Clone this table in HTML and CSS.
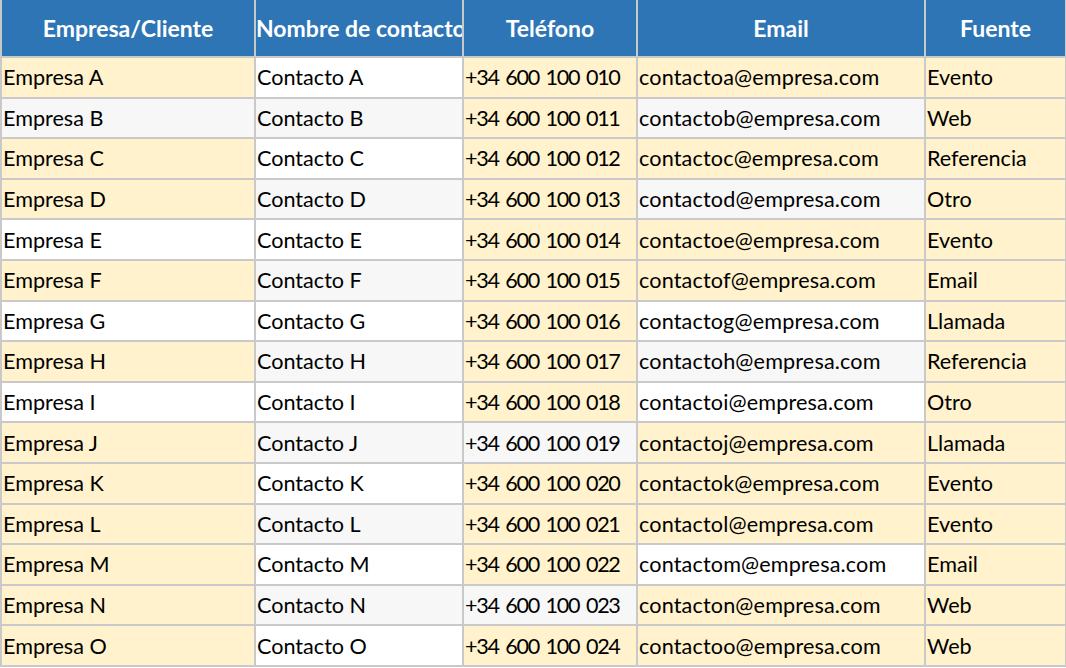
FILE: index.html
```html
<!DOCTYPE html>
<html lang="es">
<head>
<meta charset="utf-8">
<title>Contactos</title>
<link rel="stylesheet" href="styles.css">
</head>
<body>
<table class="sheet">
  <colgroup>
    <col class="c1"><col class="c2"><col class="c3"><col class="c4"><col class="c5">
  </colgroup>
  <thead>
    <tr><th>Empresa/Cliente</th><th>Nombre de contacto</th><th>Teléfono</th><th>Email</th><th>Fuente</th></tr>
  </thead>
  <tbody>
    <tr class="odd"><td class="hl">Empresa A</td><td>Contacto A</td><td class="hl">+34 600 100 010</td><td class="hl">contactoa@empresa.com</td><td class="hl">Evento</td></tr>
    <tr class="even"><td>Empresa B</td><td>Contacto B</td><td class="hl">+34 600 100 011</td><td>contactob@empresa.com</td><td class="hl">Web</td></tr>
    <tr class="odd"><td class="hl">Empresa C</td><td>Contacto C</td><td class="hl">+34 600 100 012</td><td class="hl">contactoc@empresa.com</td><td class="hl">Referencia</td></tr>
    <tr class="even"><td class="hl">Empresa D</td><td>Contacto D</td><td class="hl">+34 600 100 013</td><td>contactod@empresa.com</td><td class="hl">Otro</td></tr>
    <tr class="odd"><td>Empresa E</td><td>Contacto E</td><td class="hl">+34 600 100 014</td><td class="hl">contactoe@empresa.com</td><td class="hl">Evento</td></tr>
    <tr class="even"><td class="hl">Empresa F</td><td>Contacto F</td><td class="hl">+34 600 100 015</td><td class="hl">contactof@empresa.com</td><td class="hl">Email</td></tr>
    <tr class="odd"><td>Empresa G</td><td>Contacto G</td><td class="hl">+34 600 100 016</td><td>contactog@empresa.com</td><td class="hl">Llamada</td></tr>
    <tr class="even"><td class="hl">Empresa H</td><td>Contacto H</td><td class="hl">+34 600 100 017</td><td>contactoh@empresa.com</td><td class="hl">Referencia</td></tr>
    <tr class="odd"><td>Empresa I</td><td>Contacto I</td><td class="hl">+34 600 100 018</td><td>contactoi@empresa.com</td><td class="hl">Otro</td></tr>
    <tr class="even"><td class="hl">Empresa J</td><td>Contacto J</td><td>+34 600 100 019</td><td class="hl">contactoj@empresa.com</td><td class="hl">Llamada</td></tr>
    <tr class="odd"><td class="hl">Empresa K</td><td>Contacto K</td><td class="hl">+34 600 100 020</td><td class="hl">contactok@empresa.com</td><td class="hl">Evento</td></tr>
    <tr class="even"><td class="hl">Empresa L</td><td>Contacto L</td><td class="hl">+34 600 100 021</td><td class="hl">contactol@empresa.com</td><td class="hl">Evento</td></tr>
    <tr class="odd"><td class="hl">Empresa M</td><td>Contacto M</td><td class="hl">+34 600 100 022</td><td>contactom@empresa.com</td><td class="hl">Email</td></tr>
    <tr class="even"><td class="hl">Empresa N</td><td>Contacto N</td><td>+34 600 100 023</td><td class="hl">contacton@empresa.com</td><td class="hl">Web</td></tr>
    <tr class="odd"><td class="hl">Empresa O</td><td>Contacto O</td><td class="hl">+34 600 100 024</td><td class="hl">contactoo@empresa.com</td><td class="hl">Web</td></tr>
  </tbody>
</table>
</body>
</html>
```
FILE: styles.css
```css
html, body {
  margin: 0;
  padding: 0;
  background: #ffffff;
}

.sheet {
  border-collapse: collapse;
  table-layout: fixed;
  width: 1065px;
  font-family: Lato, "Liberation Sans", sans-serif;
  font-size: 21.6px;
  color: #000;
}

.c1 { width: 254px; }
.c2 { width: 208px; }
.c3 { width: 174px; }
.c4 { width: 288px; }
.c5 { width: 141px; }

.sheet th,
.sheet td {
  border: 2px solid #c9c9c9;
  white-space: nowrap;
  overflow: hidden;
  padding: 0 0 0 1px;
}

.sheet th {
  background: #2e75b6;
  color: #ffffff;
  font-weight: bold;
  font-size: 23px;
  text-align: center;
  height: 56px;
  padding: 0;
  border-top: none;
}

.sheet td {
  height: 38.6px;
  text-align: left;
}

.sheet td:nth-child(3) {
  letter-spacing: -1.3px;
  word-spacing: 2.4px;
}

.sheet td:nth-child(4) {
  letter-spacing: 0.15px;
}

.sheet tr.odd td { background: #ffffff; }
.sheet tr.even td { background: #f7f7f7; }
.sheet tr td.hl { background: #fff2cc; }
```
